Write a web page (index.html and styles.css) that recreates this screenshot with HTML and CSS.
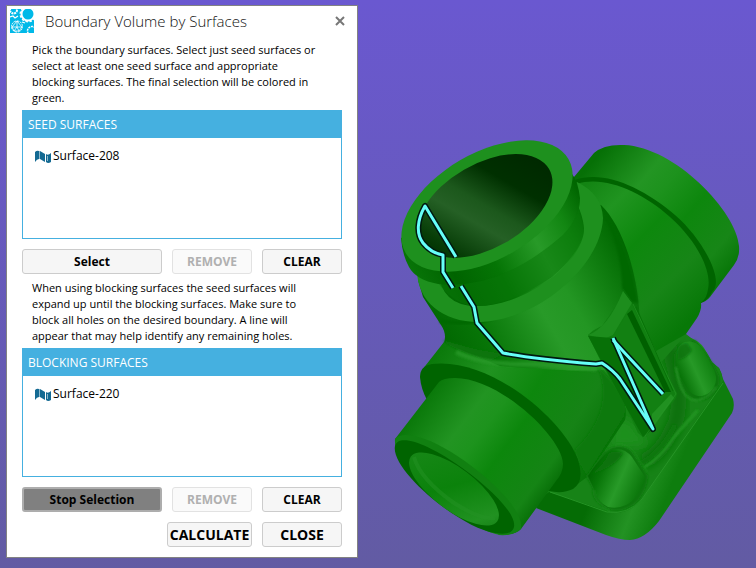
FILE: index.html
```html
<!DOCTYPE html>
<html lang="en">
<head>
    <meta charset="UTF-8">
    <meta name="viewport" content="width=device-width, initial-scale=1.0">
    <title>Boundary Volume by Surfaces</title>
    <link rel="stylesheet" href="styles.css">
</head>
<body>
    <main class="workspace">
        <section class="dialog">
            <header class="dialog-header">
                <svg class="logo" viewBox="0 0 24 24">
                    <rect width="24" height="24" fill="#00b9e8"/>
                    <g fill="none" stroke="#fff">
                        <circle cx="18" cy="5" r="6.500" stroke-width="2"/>
                        <circle cx="18" cy="5" r="7.800" stroke-width="1.400" stroke-dasharray="2.400 1.700"/>
                        <circle cx="3.500" cy="1" r="3.500" stroke-width="2" stroke-dasharray="2 .7"/>
                        <circle cx="7" cy="17.500" r="5.500" stroke-width="1" stroke-dasharray="2 .8"/>
                        <path d="M7 12l5 6-3 4H4l-2-4zM7 12v6l-5 0M7 18l5 0M7 18l2 4M7 18l-3 4" stroke-width=".8"/>
                        <circle cx="22" cy="22" r="4.500" stroke-width="1.500" stroke-dasharray="2 .8"/>
                        <path d="M0 8l3-1 2 2 3-2M12 13l3 1" stroke-width="1.200"/>
                    </g>
                </svg>
                <h1>Boundary Volume by Surfaces</h1>
                <button class="close" type="button" aria-label="Close">
                    <svg viewBox="0 0 10 10"><path d="M1 1l8 8M9 1L1 9"/></svg>
                </button>
            </header>

            <div class="dialog-body">
                <p>Pick the boundary surfaces. Select just seed surfaces or<br>
                    select at least one seed surface and appropriate<br>
                    blocking surfaces. The final selection will be colored in<br>
                    green.</p>
                <div class="list">
                    <h2>SEED SURFACES</h2>
                    <ul>
                        <li>
                            <svg class="surface-icon" viewBox="0 0 16 13"><path d="M0 2Q2 0 4 1v8Q2 9 0 12z"/><path d="M5 1l5 3v8L5 9z"/><path d="M11 4q2 2 5-1v9q-3 2-5 0z"/><path class="fold" d="M12.500 6v5M4.500 1v8"/></svg>
                            <span>Surface-208</span>
                        </li>
                    </ul>
                </div>
                <div class="buttons">
                    <button class="btn wide" type="button">Select</button>
                    <button class="btn" type="button" disabled>REMOVE</button>
                    <button class="btn" type="button">CLEAR</button>
                </div>

                <p>When using blocking surfaces the seed surfaces will<br>
                    expand up until the blocking surfaces. Make sure to<br>
                    block all holes on the desired boundary. A line will<br>
                    appear that may help identify any remaining holes.</p>
                <div class="list">
                    <h2>BLOCKING SURFACES</h2>
                    <ul>
                        <li>
                            <svg class="surface-icon" viewBox="0 0 16 13"><path d="M0 2Q2 0 4 1v8Q2 9 0 12z"/><path d="M5 1l5 3v8L5 9z"/><path d="M11 4q2 2 5-1v9q-3 2-5 0z"/><path class="fold" d="M12.500 6v5M4.500 1v8"/></svg>
                            <span>Surface-220</span>
                        </li>
                    </ul>
                </div>
                <div class="buttons">
                    <button class="btn wide active" type="button">Stop Selection</button>
                    <button class="btn" type="button" disabled>REMOVE</button>
                    <button class="btn" type="button">CLEAR</button>
                </div>
                <div class="buttons actions">
                    <button class="btn" type="button">CALCULATE</button>
                    <button class="btn" type="button">CLOSE</button>
                </div>
            </div>
        </section>

        <svg class="model" viewBox="358 0 398 568" preserveAspectRatio="xMinYMin meet" role="img" aria-label="Valve body">
            <defs>
                <linearGradient id="pipe" gradientUnits="userSpaceOnUse" x1="594" y1="160" x2="730" y2="275">
                    <stop offset="0" stop-color="#067006"/>
                    <stop offset=".28" stop-color="#239523"/>
                    <stop offset=".4" stop-color="#1d921d"/>
                    <stop offset=".6" stop-color="#0d870d"/>
                    <stop offset=".85" stop-color="#178617"/>
                    <stop offset="1" stop-color="#067506"/>
                </linearGradient>
                <linearGradient id="pipeBody" gradientUnits="userSpaceOnUse" x1="580" y1="190" x2="700" y2="310">
                    <stop offset="0" stop-color="#138413"/>
                    <stop offset=".2" stop-color="#209420"/>
                    <stop offset=".45" stop-color="#0d880d"/>
                    <stop offset=".75" stop-color="#178517"/>
                    <stop offset="1" stop-color="#077807"/>
                </linearGradient>
                <linearGradient id="front" gradientUnits="userSpaceOnUse" x1="412" y1="405" x2="550" y2="508">
                    <stop offset="0" stop-color="#067406"/>
                    <stop offset=".3" stop-color="#229422"/>
                    <stop offset=".42" stop-color="#1d931d"/>
                    <stop offset=".58" stop-color="#0c870c"/>
                    <stop offset=".85" stop-color="#158415"/>
                    <stop offset="1" stop-color="#006400"/>
                </linearGradient>
                <linearGradient id="frontBody" gradientUnits="userSpaceOnUse" x1="425" y1="350" x2="600" y2="460">
                    <stop offset="0" stop-color="#067406"/>
                    <stop offset=".32" stop-color="#209220"/>
                    <stop offset=".55" stop-color="#0d870d"/>
                    <stop offset=".8" stop-color="#168316"/>
                    <stop offset="1" stop-color="#067206"/>
                </linearGradient>
                <linearGradient id="bore" gradientUnits="userSpaceOnUse" x1="415" y1="460" x2="495" y2="520">
                    <stop offset="0" stop-color="#178717"/>
                    <stop offset=".45" stop-color="#0b820b"/>
                    <stop offset=".85" stop-color="#219121"/>
                    <stop offset="1" stop-color="#158215"/>
                </linearGradient>
                <linearGradient id="neck" gradientUnits="userSpaceOnUse" x1="440" y1="345" x2="622" y2="240">
                    <stop offset="0" stop-color="#006600"/>
                    <stop offset=".2" stop-color="#077507"/>
                    <stop offset=".5" stop-color="#289a28"/>
                    <stop offset=".65" stop-color="#239623"/>
                    <stop offset="1" stop-color="#006800"/>
                </linearGradient>
                <linearGradient id="rim" gradientUnits="userSpaceOnUse" x1="415" y1="280" x2="578" y2="190">
                    <stop offset="0" stop-color="#087508"/>
                    <stop offset=".2" stop-color="#006400"/>
                    <stop offset=".42" stop-color="#057505"/>
                    <stop offset=".67" stop-color="#289a28"/>
                    <stop offset=".85" stop-color="#128612"/>
                    <stop offset="1" stop-color="#006600"/>
                </linearGradient>
                <linearGradient id="hole" gradientUnits="userSpaceOnUse" x1="425" y1="243" x2="548" y2="172">
                    <stop offset="0" stop-color="#003000"/>
                    <stop offset=".12" stop-color="#073d07"/>
                    <stop offset=".36" stop-color="#256025"/>
                    <stop offset=".5" stop-color="#1c581c"/>
                    <stop offset=".72" stop-color="#003000"/>
                    <stop offset="1" stop-color="#002800"/>
                </linearGradient>
                <linearGradient id="plate" gradientUnits="userSpaceOnUse" x1="590" y1="500" x2="690" y2="540">
                    <stop offset="0" stop-color="#056c05"/>
                    <stop offset=".4" stop-color="#239223"/>
                    <stop offset=".65" stop-color="#0e7d0e"/>
                    <stop offset="1" stop-color="#0e7d0e"/>
                </linearGradient>
                <linearGradient id="lug" gradientUnits="userSpaceOnUse" x1="592" y1="465" x2="645" y2="488">
                    <stop offset="0" stop-color="#006400"/>
                    <stop offset=".2" stop-color="#087508"/>
                    <stop offset=".55" stop-color="#289a28"/>
                    <stop offset="1" stop-color="#067106"/>
                </linearGradient>
                <linearGradient id="lugRight" gradientUnits="userSpaceOnUse" x1="677" y1="378" x2="717" y2="360">
                    <stop offset="0" stop-color="#006a00"/>
                    <stop offset=".45" stop-color="#279927"/>
                    <stop offset="1" stop-color="#077707"/>
                </linearGradient>
                <filter id="soft" x="-30%" y="-30%" width="160%" height="160%">
                    <feGaussianBlur stdDeviation="4"/>
                </filter>
                <filter id="edge" x="-30%" y="-30%" width="160%" height="160%">
                    <feGaussianBlur stdDeviation="1"/>
                </filter>
                <clipPath id="plateClip">
                    <path d="M538 500L690 330 700 345Q708 352 712 363L719 368Q722 374 723 381L643 498Q628 516 610 512L549 492z"/>
                </clipPath>
            </defs>

            <!-- back pipe -->
            <path fill="url(#pipe)" d="M574 177L594 153Q604 144 624 145C675 147 737 212 739 246Q740 257 734 265L710 297Q706 302 700 303L574 190z"/>
            <path fill="#006400" d="M575 180C604 170 642 187 675 215C704 240 725 282 712 292Q708 300 701 303L690 290 577 188z"/>
            <path fill="url(#pipeBody)" d="M577 184C604 175 642 192 670 217C698 242 712 272 708 289Q707 298 701 303Q702 310 697 318L686 334 690 400 600 400 590 240z"/>

            <!-- base plate -->
            <path fill="url(#plate)" d="M536 508L549 485 640 400 686 336Q700 341 704 348L712 362 719 368Q722 373 723 379L733 399Q735 407 732 413L659 521Q645 539 630 540Q620 540 606 535z"/>
            <path fill="#178317" d="M538 500L640 360 686 334 700 345Q708 352 712 363L719 368Q722 374 723 381L643 498Q628 516 610 512L549 492z"/>
            <g clip-path="url(#plateClip)">
                <path fill="none" stroke="#077107" stroke-width="16" filter="url(#soft)" d="M667 340Q687 405 672 430Q660 455 642 462"/>
                <path fill="none" stroke="#249524" stroke-width="3" filter="url(#edge)" d="M698 410L673 438Q660 458 644 467"/>
                <path fill="none" stroke="#0b780b" stroke-width="5" filter="url(#edge)" d="M675 425Q662 452 640 464"/>
                <path fill="#1f901f" filter="url(#soft)" d="M615 420L630 420 648 445 610 447z"/>
            </g>
            <path fill="none" stroke="#269426" stroke-width="1" d="M550 492L607 512Q628 515 642 499L723 383"/>
            <path fill="#0b750b" filter="url(#edge)" d="M675 352C668 370 686 398 695 400C710 404 722 388 719 376L713 364 695 340z"/>
            <path fill="url(#lugRight)" d="M677 350C680 340 694 338 702 348L712 366Q721 381 710 392C697 402 689 392 684 383Q672 365 677 350z"/>
            <path fill="none" stroke="#259425" stroke-width="2" filter="url(#edge)" d="M676 367Q681 403 699 400Q709 397 716 387"/>
            <path fill="#07720a" opacity=".8" filter="url(#edge)" d="M677 352Q677 343 687 343L692 350Q688 358 678 360z"/>

            <!-- centre body -->
            <path fill="url(#neck)" d="M418 280L423 297 441 325Q449 337 441 348L600 430Q628 410 637 390L640 330C640 275 622 225 601 205z"/>
            <path fill="#006800" filter="url(#edge)" d="M603 214C619 230 633 267 638 303L631 302 622 288Q622 250 603 214z"/>
            <path fill="url(#frontBody)" d="M444 342L422 370C440 370 562 474 575 486L587 477 625 420Q630 400 604 370Q575 372 500 366z"/>
            <path fill="#087508" filter="url(#edge)" d="M443 340L476 349 504 354 490 361Q465 355 447 344z"/>
            <path fill="none" stroke="#2a9b2a" stroke-width="5" filter="url(#edge)" opacity=".7" d="M456 352Q485 366 535 364L596 369"/>
            <path fill="#0b790b" filter="url(#edge)" d="M598 368Q630 396 624 416L587 475Q576 460 575 450Q615 410 598 368z"/>
            <path fill="none" stroke="#006900" stroke-width="4" filter="url(#edge)" d="M440 321Q466 326 495 317"/>

            <!-- collar and rim -->
            <path fill="#1e901e" d="M417 270C417 302 444 323 481 322C542 319 602 263 603 218Q602 194 577 182L570 190z"/>
            <path fill="url(#rim)" d="M438 270Q441 307 478 306C525 306 585 262 584 228Q583 216 577 204L570 190z"/>
            <path fill="url(#rim)" d="M401 238Q402 254 409 267Q416 280 438 284C492 293 580 246 580 198Q578 181 572 174L486 195z"/>
            <path fill="#087508" opacity=".5" d="M439 284Q500 290 563 235Q580 217 580 198L578 206 584 228Q583 250 552 277Q510 305 478 306Q455 306 439 284z"/>
            <ellipse cx="487" cy="206" rx="94" ry="53" fill="#1e901e" transform="rotate(-30 487 206)"/>
            <ellipse cx="485" cy="206" rx="74" ry="42" fill="url(#hole)" transform="rotate(-30 485 206)"/>

            <!-- front pipe -->
            <path fill="#006400" d="M420 377Q420 366 432 364C492 357 565 422 578 460Q585 481 573 489Q563 494 549 491L520 470 427 400Q421 389 420 377z"/>
            <path fill="url(#front)" d="M395 439L439 382Q443 378 455 378C500 378 563 438 563 464Q563 473 556 481L521 529Q516 534 504 535C480 537 394 476 395 439z"/>
            <path fill="#118011" d="M395 439Q400 433 414 436C450 442 526 503 521 529Q514 536 499 535L404 467Q394 451 395 439z"/>
            <path fill="#006400" d="M395 446C399 432 430 446 455 463C486 484 517 513 514 527Q512 536 495 533C460 528 390 470 395 446z"/>
            <ellipse cx="454" cy="489" rx="54" ry="21" fill="url(#bore)" transform="rotate(37 454 489)"/>
            <path fill="none" stroke="#239223" stroke-width="4" opacity=".5" d="M414 457Q420 479 454 503Q481 520 495 518"/>

            <!-- slotted pocket -->
            <path fill="#117f11" d="M588 335Q594 329 602 326L623 296 632 304 677 393Q677 399 670 405L643 437 638 433 626 407 604 368z"/>
            <path fill="#1d8d1d" d="M588 335Q608 328 623 291L632 303 613 335 604 339z"/>
            <path fill="#077007" d="M588 336L612 338 653 429 643 437 626 407z"/>
            <path fill="#128012" d="M613 336L630 308 666 391 653 428z"/>
            <path fill="#219121" d="M652 414L671 394 674 398 651 430z"/>
            <path fill="#006000" d="M627 314L632 310 671 392 665 392z"/>
            <path fill="none" stroke="#269526" stroke-width="1" opacity=".6" d="M633 304L676 394 645 436"/>
            <path fill="none" stroke="#077207" stroke-width="1" d="M636 307L673 391M623 289L632 302"/>

            <!-- lower lug -->
            <path fill="#0b760b" filter="url(#edge)" d="M586 476L604 451Q619 441 632 451L648 476Q648 487 638 501Q623 515 606 508 590 499 593 489z"/>
            <path fill="url(#lug)" d="M588 476Q604 451 615 449Q625 448 632 457L645 477Q646 484 634 499Q624 510 608 507Q598 503 594 489z"/>
            <path fill="#087208" filter="url(#edge)" d="M590 475Q605 463 608 454Q613 449 623 453Q617 466 590 475z"/>
            <path fill="none" stroke="#269526" stroke-width="1" filter="url(#edge)" d="M605 451Q620 439 632 450L647 472M594 490Q595 503 610 511"/>

            <!-- leak line -->
            <g class="trace trace-outline">
                <path d="M456 257L425 206C417 220 416 234 423 243Q431 253 443 255V272L453 288"/>
                <path d="M461 286L474 307 477 323 503 353Q535 359 596 364L602 363Q613 370 620 379L653 429 613 338"/>
                <path d="M613 340L622 350 663 394"/>
            </g>
            <g class="trace">
                <path d="M456 257L425 206C417 220 416 234 423 243Q431 253 443 255V272L453 288"/>
                <path d="M461 286L474 307 477 323 503 353Q535 359 596 364L602 363Q613 370 620 379L653 429 613 338"/>
                <path d="M613 340L622 350 663 394"/>
            </g>
        </svg>
    </main>
</body>
</html>
```
FILE: styles.css
```css
* {
    box-sizing: border-box;
}

body {
    margin: 0;
    font-family: "Open Sans", "Noto Sans", sans-serif;
    font-size: 12px;
    line-height: 16px;
    color: #000;
}

.workspace {
    display: flex;
    align-items: flex-start;
    min-height: 100vh;
    background: linear-gradient(#6a58d0, #625ba3);
}

.dialog {
    flex: 0 0 auto;
    width: 352px;
    margin: 5px 0 0 6px;
    background: #fff;
    border: 1px solid #828282;
}

.dialog-header {
    display: flex;
    align-items: center;
    height: 36px;
    padding: 0 12px 6px 3px;
}

.logo {
    width: 24px;
    height: 24px;
}

.dialog-header h1 {
    flex: 1;
    margin: 0 0 0 11px;
    font-size: 15px;
    font-weight: 300;
    line-height: 24px;
    color: #111;
}

.close {
    display: flex;
    padding: 0;
    border: none;
    background: none;
}

.close svg {
    width: 10px;
    height: 10px;
    stroke: #777;
    stroke-width: 2;
}

.dialog-body {
    padding: 0 15px 10px;
}

.dialog-body p {
    margin: 0 0 4px;
    padding-left: 10px;
    font-size: 11px;
    white-space: nowrap;
}

.list {
    height: 129px;
    border: 1px solid #45b0e0;
}

.list h2 {
    margin: 0;
    padding: 0 5px;
    font-size: 12px;
    font-weight: 400;
    line-height: 27px;
    background: #45b0e0;
    color: #fff;
}

.list ul {
    margin: 0;
    padding: 10px 12px;
    list-style: none;
}

.list li {
    display: flex;
    align-items: center;
    gap: 2px;
}

.surface-icon {
    width: 16px;
    height: 13px;
    fill: #146a93;
}

.surface-icon .fold {
    stroke: #8fb9cd;
}

.buttons {
    display: grid;
    grid-template-columns: 140px 80px 80px;
    gap: 10px;
    margin: 10px 0 6px;
}

.btn {
    height: 25px;
    padding: 0;
    border: 1px solid #ccc;
    border-radius: 3px;
    background: #f6f6f6;
    font-family: inherit;
    font-size: 12px;
    font-weight: 700;
    color: #000;
}

.btn:disabled {
    border-color: #e2e2e2;
    background: #fafafa;
    color: #b0b0b0;
}

.btn.active {
    border: 2px solid #adadad;
    background: #808080;
}

.actions {
    grid-template-columns: 85px 80px;
    justify-content: end;
    margin-bottom: 0;
}

.actions .btn {
    font-size: 14px;
}

.model {
    flex: 1;
    min-width: 0;
    height: 100vh;
}

.trace {
    fill: none;
    stroke: #66fff8;
    stroke-width: 3;
    stroke-linejoin: round;
}

.trace-outline {
    stroke: #001a10;
    stroke-width: 6;
}
```
